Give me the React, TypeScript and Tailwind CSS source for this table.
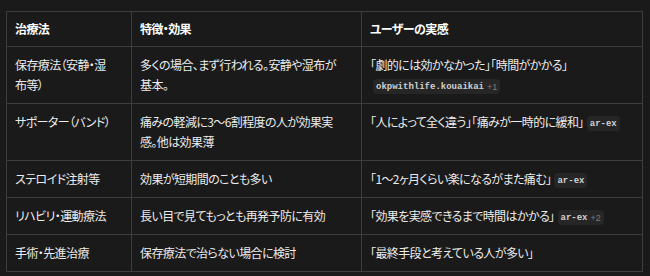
import React from "react";

// 治療法の比較テーブル
type Src = { name: string; more?: number };

interface Row {
  method: React.ReactNode;
  effect: React.ReactNode;
  voice: string;
  src?: Src;
}

const ROWS: Row[] = [
  {
    method: <>保存療法（安静・湿<br />布等）</>,
    effect: <>多くの場合、まず行われる。安静や湿布が<br />基本。</>,
    voice: "「劇的には効かなかった」「時間がかかる」",
    src: { name: "okpwithlife.kouaikai", more: 1 },
  },
  {
    method: "サポーター（バンド）",
    effect: <>痛みの軽減に3〜6割程度の人が効果実<br />感。他は効果薄</>,
    voice: "「人によって全く違う」「痛みが一時的に緩和」",
    src: { name: "ar-ex" },
  },
  {
    method: "ステロイド注射等",
    effect: "効果が短期間のことも多い",
    voice: "「1〜2ヶ月くらい楽になるがまた痛む」",
    src: { name: "ar-ex" },
  },
  {
    method: "リハビリ・運動療法",
    effect: "長い目で見てもっとも再発予防に有効",
    voice: "「効果を実感できるまで時間はかかる」",
    src: { name: "ar-ex", more: 2 },
  },
  {
    method: "手術・先進治療",
    effect: "保存療法で治らない場合に検討",
    voice: "「最終手段と考えている人が多い」",
  },
];

// 出典バッジ
function SourceBadge({ src }: { src: Src }) {
  return (
    <span className="inline-flex items-center gap-[3px] ml-[3px] h-[15px] px-[3px] rounded-[4px] bg-[#262626] align-middle whitespace-nowrap tracking-normal">
      <span className="font-['Liberation_Mono',monospace] text-[9px] font-bold text-[#d0d0d0]">
        {src.name}
      </span>
      {src.more && (
        <span className="font-['Liberation_Sans',sans-serif] text-[9px] text-[#7d7d7d]">
          +{src.more}
        </span>
      )}
    </span>
  );
}

const cell = "border border-[#3d3d3d] px-2 py-2 align-top";

export default function App() {
  return (
    <div className="w-[650px] h-[276px] bg-[#1a1a1a] pt-[11px] pl-[6px] pr-[7px] font-['Noto_Sans_CJK_JP','Noto_Sans',sans-serif] [font-feature-settings:'palt'] [text-spacing-trim:trim-both] text-[12px] leading-[20px] tracking-[-0.6px] text-[#ececec]">
      <table className="w-full table-fixed border-collapse">
        <colgroup>
          <col className="w-[125px]" />
          <col className="w-[230px]" />
          <col />
        </colgroup>
        <thead>
          <tr className="text-left text-white">
            <th className={`${cell} font-bold h-[35px] py-[7px]`}>治療法</th>
            <th className={`${cell} font-bold py-[7px]`}>特徴・効果</th>
            <th className={`${cell} font-bold py-[7px]`}>ユーザーの実感</th>
          </tr>
        </thead>
        <tbody>
          {ROWS.map((r, i) => (
            <tr key={i}>
              <td className={cell}>{r.method}</td>
              <td className={cell}>{r.effect}</td>
              <td className={cell}>
                {r.voice}
                {r.src && <SourceBadge src={r.src} />}
              </td>
            </tr>
          ))}
        </tbody>
      </table>
    </div>
  );
}
